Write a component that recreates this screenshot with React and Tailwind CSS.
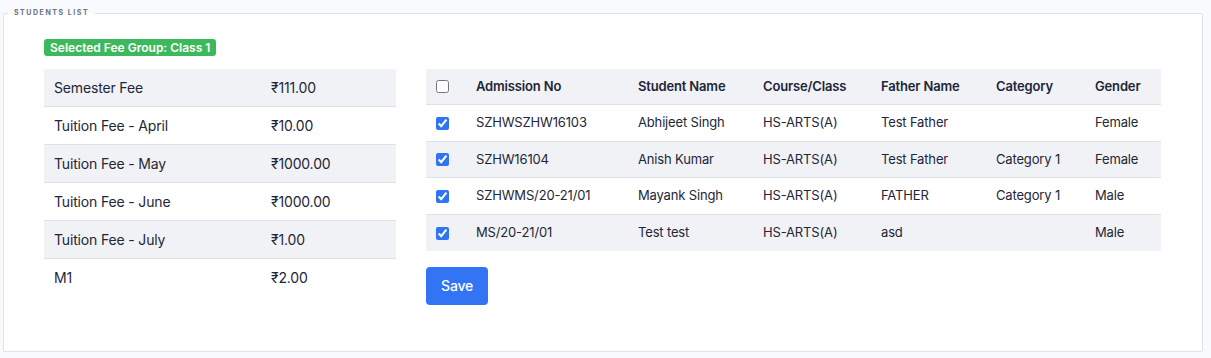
import React from 'react';

const fees = [
  { name: 'Semester Fee', amount: '₹111.00' },
  { name: 'Tuition Fee - April', amount: '₹10.00' },
  { name: 'Tuition Fee - May', amount: '₹1000.00' },
  { name: 'Tuition Fee - June', amount: '₹1000.00' },
  { name: 'Tuition Fee - July', amount: '₹1.00' },
  { name: 'M1', amount: '₹2.00' },
];

const students = [
  { adm: 'SZHWSZHW16103', name: 'Abhijeet Singh', course: 'HS-ARTS(A)', father: 'Test Father', category: '', gender: 'Female' },
  { adm: 'SZHW16104', name: 'Anish Kumar', course: 'HS-ARTS(A)', father: 'Test Father', category: 'Category 1', gender: 'Female' },
  { adm: 'SZHWMS/20-21/01', name: 'Mayank Singh', course: 'HS-ARTS(A)', father: 'FATHER', category: 'Category 1', gender: 'Male' },
  { adm: 'MS/20-21/01', name: 'Test test', course: 'HS-ARTS(A)', father: 'asd', category: '', gender: 'Male' },
];

export default function App() {
  return (
    <div className="w-[1211px] h-[358px] bg-[#f9fafd] pt-[8px] pl-[3px] font-['Inter','Noto_Sans',sans-serif] text-[#1e2638] tracking-[-0.01em]">
      {/* Students fieldset */}
      <fieldset className="w-[1200px] h-[344px] bg-white border border-[#dfe2ea] rounded-[2px] pt-[20px]">
        <legend className="ml-[4px] px-[6px] text-[7px] font-bold tracking-[0.22em] uppercase text-[#6b7280]">
          Students List
        </legend>

        <div className="flex gap-[30px] pl-[40px]">
          {/* Fee group */}
          <div className="w-[352px] flex flex-col">
            <span className="self-start bg-[#3cb95b] text-white text-[12px] font-semibold leading-[17px] px-[6px] tracking-normal rounded-[3px]">
              Selected Fee Group: Class 1
            </span>
            <table className="mt-[13px] w-full text-[14px] border-collapse">
              <tbody>
                {fees.map((f, i) => (
                  <tr
                    key={f.name}
                    className={`h-[38px] border-b border-[#dee1e8] last:border-b-0 ${i % 2 === 0 ? 'bg-[#f1f2f6]' : 'bg-white'}`}
                  >
                    <td className="pl-[10px] w-[227px]">{f.name}</td>
                    <td>{f.amount}</td>
                  </tr>
                ))}
              </tbody>
            </table>
          </div>

          {/* Student table */}
          <div className="w-[735px] pt-[30px] flex flex-col items-start">
            <table className="w-full text-[13px] border-collapse table-fixed">
              <colgroup>
                <col className="w-[40px]" />
                <col className="w-[162px]" />
                <col className="w-[125px]" />
                <col className="w-[118px]" />
                <col className="w-[115px]" />
                <col className="w-[99px]" />
                <col className="w-[76px]" />
              </colgroup>
              <thead>
                <tr className="h-[36px] bg-[#f1f2f6] border-b border-[#dee1e8] text-left">
                  <th className="pl-[10px]">
                    <input type="checkbox" className="w-[13px] h-[13px] align-middle" readOnly />
                  </th>
                  <th className="pl-[10px] font-semibold">Admission No</th>
                  <th className="pl-[10px] font-semibold">Student Name</th>
                  <th className="pl-[10px] font-semibold">Course/Class</th>
                  <th className="pl-[10px] font-semibold">Father Name</th>
                  <th className="pl-[10px] font-semibold">Category</th>
                  <th className="pl-[10px] font-semibold">Gender</th>
                </tr>
              </thead>
              <tbody>
                {students.map((s, i) => (
                  <tr
                    key={s.adm}
                    className={`h-[36.5px] border-b border-[#dee1e8] last:border-b-0 ${i % 2 === 1 ? 'bg-[#f1f2f6]' : 'bg-white'}`}
                  >
                    <td className="pl-[10px]">
                      <input type="checkbox" defaultChecked className="w-[13px] h-[13px] align-middle accent-[#2f74f3]" />
                    </td>
                    <td className="pl-[10px]">{s.adm}</td>
                    <td className="pl-[10px]">{s.name}</td>
                    <td className="pl-[10px]">{s.course}</td>
                    <td className="pl-[10px]">{s.father}</td>
                    <td className="pl-[10px]">{s.category}</td>
                    <td className="pl-[10px]">{s.gender}</td>
                  </tr>
                ))}
              </tbody>
            </table>
            <button className="mt-[16px] h-[38px] px-[15px] bg-[#3374f5] text-white text-[14px] font-medium rounded-[4px]">
              Save
            </button>
          </div>
        </div>
      </fieldset>
    </div>
  );
}
